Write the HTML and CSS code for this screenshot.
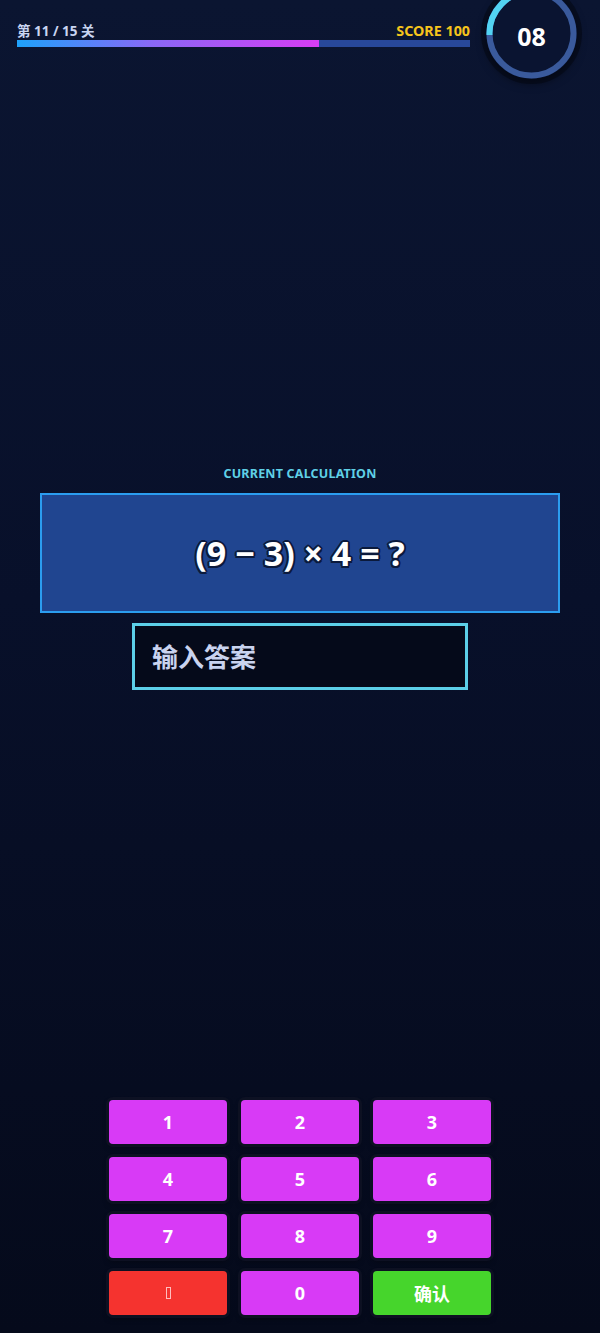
FILE: index.html
```html
<!DOCTYPE html>
<html lang="zh">
<head>
<meta charset="utf-8">
<title>Calc</title>
<link rel="stylesheet" href="styles.css">
</head>
<body>
<div class="app">
  <header class="header">
    <div class="status">
      <div class="labels">
        <span class="level">第 11 / 15 关</span>
        <span class="score">SCORE 100</span>
      </div>
      <div class="bar"><div class="bar-fill" style="width:66.7%"></div></div>
    </div>
    <div class="timer">
      <svg class="ring" viewBox="0 0 91 91" width="91" height="91">
        <circle cx="45.5" cy="45.5" r="42" fill="#0a1431" stroke="#3a5a9c" stroke-width="6"/>
        <path d="M3.5 47 A42 42 0 0 1 45.5 3.5" fill="none" stroke="#52d3f2" stroke-width="6"/>
      </svg>
      <span class="time">08</span>
    </div>
  </header>

  <main class="quiz">
    <div class="quiz-label">CURRENT CALCULATION</div>
    <div class="expr">(9 − 3) × 4 = ?</div>
    <input class="answer" type="text" placeholder="输入答案">
  </main>

  <section class="keypad">
    <button class="key">1</button>
    <button class="key">2</button>
    <button class="key">3</button>
    <button class="key">4</button>
    <button class="key">5</button>
    <button class="key">6</button>
    <button class="key">7</button>
    <button class="key">8</button>
    <button class="key">9</button>
    <button class="key key-del" aria-label="删除"><span class="tofu"></span></button>
    <button class="key">0</button>
    <button class="key key-ok">确认</button>
  </section>
</div>
</body>
</html>
```

FILE: styles.css
```css
* { box-sizing: border-box; }
html, body { margin: 0; padding: 0; }
body {
  background: #070d22;
  font-family: "Noto Sans", "Noto Sans CJK SC", sans-serif;
  color: #fff;
}
.app {
  height: 1333px;
  display: flex;
  flex-direction: column;
  background: linear-gradient(180deg, #0b1531 0%, #08102a 45%, #050a1b 100%);
  overflow: hidden;
}
.header {
  display: flex;
  align-items: flex-start;
  gap: 16px;
  padding: 23px 0 0 17px;
}
.status { width: 453px; }
.labels {
  display: flex;
  justify-content: space-between;
  font-size: 13.5px;
  line-height: 16px;
  font-weight: 700;
}
.level { color: #c9d5f2; }
.score { color: #f6c41c; font-size: 14.3px; }
.bar {
  margin-top: 1px;
  height: 7px;
  background: #28489a;
}
.bar-fill {
  height: 100%;
  background: linear-gradient(90deg, #1ea2fb 0%, #8a68f6 45%, #d83df4 100%);
}
.timer {
  position: relative;
  width: 91px;
  height: 91px;
  margin-top: -35px;
  border-radius: 50%;
  box-shadow: 0 0 0 5px rgba(3, 7, 18, 0.55), 0 4px 10px rgba(0, 0, 0, 0.5);
}
.ring { display: block; }
.time {
  position: absolute;
  inset: 0;
  display: flex;
  align-items: center;
  justify-content: center;
  padding-top: 5px;
  font-size: 25px;
  font-weight: 700;
  color: #fff;
}
.quiz {
  margin-top: 388px;
  display: flex;
  flex-direction: column;
  align-items: center;
}
.quiz-label {
  font-size: 12.5px;
  line-height: 14px;
  font-weight: 700;
  color: #5fd0e6;
  letter-spacing: 0.2px;
}
.expr {
  margin-top: 12px;
  width: 520px;
  height: 120px;
  border: 2px solid #2b9df0;
  background: #204590;
  display: flex;
  align-items: center;
  justify-content: center;
  font-size: 34px;
  font-weight: 700;
  color: #fff;
  text-shadow:
    2px 0 0 #0b1a3c, -2px 0 0 #0b1a3c, 0 2px 0 #0b1a3c, 0 -2px 0 #0b1a3c,
    1.5px 1.5px 0 #0b1a3c, -1.5px 1.5px 0 #0b1a3c, 1.5px -1.5px 0 #0b1a3c, -1.5px -1.5px 0 #0b1a3c;
}
.answer {
  margin-top: 10px;
  width: 336px;
  height: 67px;
  border: 3px solid #5ccfe8;
  background: #050a1a;
  padding: 0 0 0 17px;
  font-family: "Noto Sans", "Noto Sans CJK SC", sans-serif;
  font-size: 26px;
  font-weight: 700;
  color: #fff;
  outline: none;
  border-radius: 0;
}
.answer::placeholder { color: #c9d3ef; opacity: 1; }
.keypad {
  margin-top: auto;
  margin-bottom: 18px;
  align-self: center;
  display: grid;
  grid-template-columns: repeat(3, 118px);
  grid-auto-rows: 44px;
  column-gap: 14px;
  row-gap: 13px;
}
.key {
  border: none;
  border-radius: 4px;
  background: #d83af6;
  color: #fff;
  font-family: "Noto Sans", "Noto Sans CJK SC", sans-serif;
  font-size: 18px;
  font-weight: 700;
  box-shadow: 0 0 0 3px rgba(14, 18, 36, 0.9), 0 3px 6px rgba(0, 0, 0, 0.4);
  display: flex;
  align-items: center;
  justify-content: center;
  padding: 0;
}
.key-del { background: #f5332f; }
.key-ok { background: #46d52c; }
.tofu {
  display: inline-block;
  width: 5px;
  height: 12px;
  border: 1px solid rgba(255, 215, 215, 0.85);
}
```
